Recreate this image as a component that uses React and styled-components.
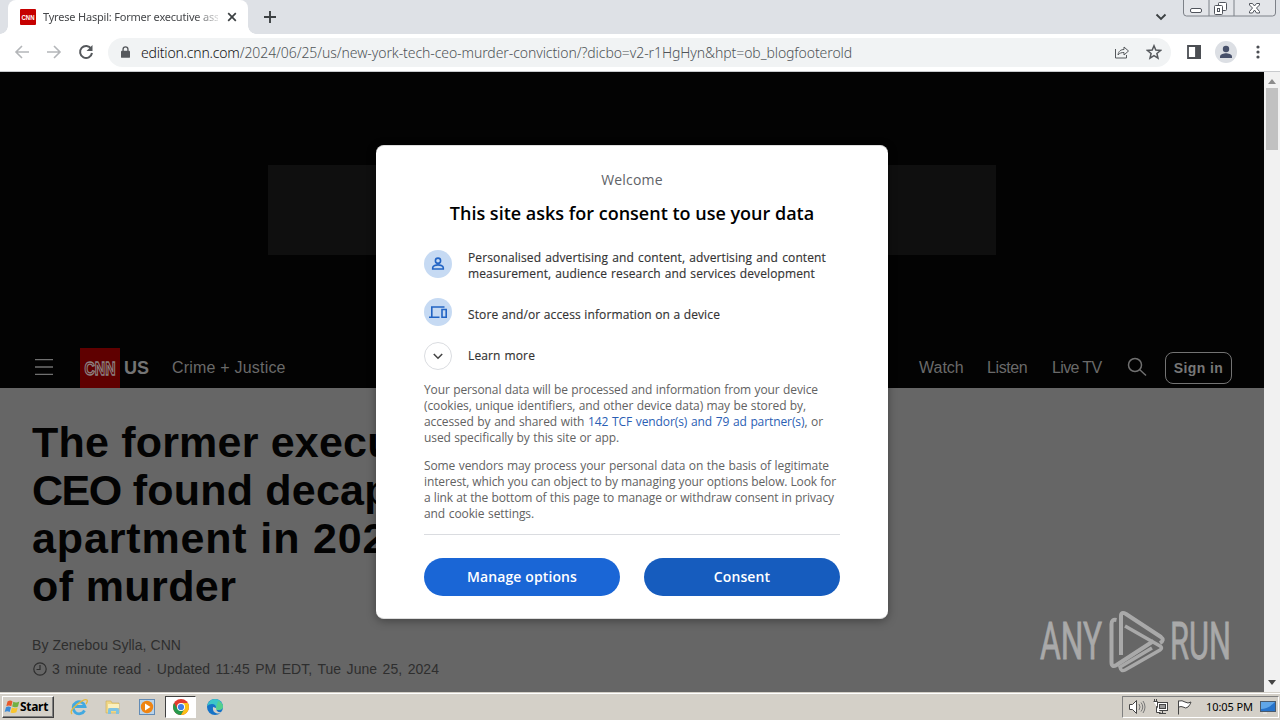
import React from 'react'
import styled, { createGlobalStyle, css } from 'styled-components'

const sans = '"Liberation Sans", Arial, sans-serif'
const open = '"Open Sans", "Noto Sans", sans-serif'
const ui = '"Noto Sans", "Open Sans", sans-serif'

const App = () => (
  <Desktop>
    <GlobalStyle />
    <TabStrip>
      <Tab>
        <Favicon viewBox="0 0 16 16">
          <rect width="16" height="16" rx="1" fill="#c60000" />
          <text x="1.5" y="11" textLength="13" lengthAdjust="spacingAndGlyphs">
            CNN
          </text>
        </Favicon>
        <TabTitle>Tyrese Haspil: Former executive assi</TabTitle>
        <TabClose viewBox="0 0 10 10">
          <path d="M1.2 1.2l7.6 7.6M8.8 1.2L1.2 8.8" />
        </TabClose>
      </Tab>
      <NewTab viewBox="0 0 14 14">
        <path d="M7 1v12M1 7h12" />
      </NewTab>
      <TabSearch viewBox="0 0 12 8">
        <path d="M1.5 1.5L6 6l4.5-4.5" />
      </TabSearch>
      <WindowButtons viewBox="0 0 94 17">
        <path
          d="M.5 0v13q0 3 3 3h86q3 0 3-3V0M26 0v16M51 0v16"
          fill="#e3e5e9"
          stroke="#7d8188"
        />
        <g fill="#fff" stroke="#50545c">
          <rect x="7.5" y="8.5" width="11" height="4" rx="1.5" />
          <rect x="35.5" y="2.5" width="8" height="8" rx="1" />
          <rect x="31.5" y="5.5" width="8" height="9" rx="1" />
          <rect x="34.5" y="8.5" width="2" height="3" />
          <path d="M66.5 3.500h3l2 2.500 2-2.500h3v1.500l-3 3 3 3.500v1.500h-3l-2-3-2 3h-3v-1.500l3-3.500-3-3z" />
        </g>
      </WindowButtons>
    </TabStrip>

    <Toolbar>
      <ToolIcon viewBox="0 0 16 16" $tone="#b4b6b9" $left={14}>
        <path d="M15 8H2M8 2L2 8l6 6" />
      </ToolIcon>
      <ToolIcon viewBox="0 0 16 16" $tone="#b4b6b9" $left={16}>
        <path d="M1 8h13M8 2l6 6-6 6" />
      </ToolIcon>
      <ToolIcon viewBox="0 0 16 16" $tone="#55585c" $left={16} $heavy>
        <path d="M13.2 4.800A6 6 0 1 0 14 9" />
        <path d="M14.5 1v6H8.500z" fill="#55585c" stroke="none" />
      </ToolIcon>
      <AddressBar>
        <Lock viewBox="0 0 10 13">
          <rect y="5" width="10" height="8" rx="1" fill="#55585c" />
          <path d="M2.3 5.500V3.500a2.700 2.700 0 0 1 5.400 0v2" />
        </Lock>
        <Url>
          <b>edition.cnn.com</b>
          /2024/06/25/us/new-york-tech-ceo-murder-conviction/?dicbo=v2-r1HgHyn&amp;hpt=ob_blogfooterold
        </Url>
        <BarIcon viewBox="0 0 16 16">
          <path d="M1.5 5v9h11v-3M4 11c.5-4 3-5.500 6-5.500V3l4.500 4L10 11V8.500C7.500 8.500 5.500 9 4 11z" />
        </BarIcon>
        <BarIcon viewBox="0 0 16 16" $heavy>
          <path d="M8 1.800l1.800 4.300 4.700.4-3.600 3 1.100 4.600L8 11.700l-4 2.400 1.100-4.600-3.600-3 4.700-.4z" />
        </BarIcon>
      </AddressBar>
      <SidePanel viewBox="0 0 14 14">
        <path d="M1 1h12v12H1z" />
        <path d="M9 1h4v12H9z" fill="#4b4e53" />
      </SidePanel>
      <Profile viewBox="0 0 22 22">
        <circle cx="11" cy="11" r="11" fill="#dcdfe4" />
        <circle cx="11" cy="8" r="3.2" />
        <path d="M5 17v-1.500c0-2.300 4-3.300 6-3.300s6 1 6 3.300V17z" />
      </Profile>
      <Kebab viewBox="0 0 4 14">
        <circle cx="2" cy="2" r="1.6" />
        <circle cx="2" cy="7" r="1.6" />
        <circle cx="2" cy="12" r="1.6" />
      </Kebab>
    </Toolbar>

    <Viewport>
      <Page>
        <AdArea>
          <AdSlot />
        </AdArea>
        <NavBar>
          <Menu viewBox="0 0 18 16">
            <path d="M0 .7h18M0 8h18M0 15.300h18" />
          </Menu>
          <Logo viewBox="0 0 40 40">
            <rect width="40" height="40" fill="#5f0000" />
            <text x="4.5" y="26.5" textLength="31" lengthAdjust="spacingAndGlyphs">
              CNN
            </text>
          </Logo>
          <Edition>US</Edition>
          <Section>Crime + Justice</Section>
          <NavLink $w={44}>Watch</NavLink>
          <NavLink $w={41} $track={-0.4}>
            Listen
          </NavLink>
          <NavLink $w={50} $track={-0.65}>
            Live TV
          </NavLink>
          <Search viewBox="0 0 20 20">
            <circle cx="8" cy="8" r="6.5" />
            <path d="M12.8 12.800L19 18.500" />
          </Search>
          <SignIn>Sign in</SignIn>
        </NavBar>
        <Article>
          <Headline>
            <HeadLine $track={0.2}>The former executive</HeadLine>
            <HeadLine $track={0.2}>
              <Tight>CEO</Tight> found decapitated
            </HeadLine>
            <HeadLine $track={0.85}>apartment in 2020</HeadLine>
            <HeadLine $track={0.4}>of murder</HeadLine>
          </Headline>
          <Meta $w={149}>By Zenebou Sylla, CNN</Meta>
          <MetaRow>
            <Clock viewBox="0 0 14 14">
              <circle cx="7" cy="7" r="6.2" />
              <path d="M7 3v4.500H3.500" />
            </Clock>
            <Meta $w={387}>
              3 minute read · Updated 11:45 PM EDT, Tue June 25, 2024
            </Meta>
          </MetaRow>
        </Article>

        <Dialog>
          <Welcome>Welcome</Welcome>
          <Title>This site asks for consent to use your data</Title>
          <Purpose $gap={16} $top>
            <Badge viewBox="0 0 28 28">
              <circle cx="14" cy="14" r="14" fill="#c6daf3" stroke="none" />
              <circle cx="14" cy="10.7" r="2.6" />
              <path d="M8.7 19v-1.200c0-2 3.500-2.900 5.300-2.900s5.300.9 5.300 2.900V19z" />
            </Badge>
            <PurposeText>
              <Line $w={358}>Personalised advertising and content, advertising and content</Line>
              <Line $w={347}>measurement, audience research and services development</Line>
            </PurposeText>
          </Purpose>
          <Purpose $gap={16}>
            <Badge viewBox="0 0 28 28">
              <circle cx="14" cy="14" r="14" fill="#c6daf3" stroke="none" />
              <path d="M20.5 9H7.800v9.500M5 19.200h10.500" />
              <path d="M18 11.500h4.200v7.700H18z" />
            </Badge>
            <PurposeText $drop={5}>
              <Line $w={252}>Store and/or access information on a device</Line>
            </PurposeText>
          </Purpose>
          <Purpose $gap={12}>
            <Badge viewBox="0 0 28 28">
              <circle cx="14" cy="14" r="13.5" fill="#fff" stroke="#dadce0" strokeWidth="1" />
              <path d="M9.8 12l4.200 4.200 4.200-4.200" stroke="#444" />
            </Badge>
            <PurposeText>
              <Line $w={67}>Learn more</Line>
            </PurposeText>
          </Purpose>
          <Legal>
            <Line $w={394}>Your personal data will be processed and information from your device</Line>
            <Line $w={382}>(cookies, unique identifiers, and other device data) may be stored by,</Line>
            <Line $w={399}>
              accessed by and shared with <a>142 TCF vendor(s) and 79 ad partner(s)</a>, or
            </Line>
            <Line $w={195}>used specifically by this site or app.</Line>
          </Legal>
          <Legal>
            <Line $w={405}>Some vendors may process your personal data on the basis of legitimate</Line>
            <Line $w={412}>interest, which you can object to by managing your options below. Look for</Line>
            <Line $w={410}>a link at the bottom of this page to manage or withdraw consent in privacy</Line>
            <Line $w={110}>and cookie settings.</Line>
          </Legal>
          <Actions>
            <Button $bg="#1a66d6">Manage options</Button>
            <Button $bg="#165cbe">Consent</Button>
          </Actions>
        </Dialog>

        <Watermark viewBox="0 0 200 64">
          <text x="2" y="50" textLength="62" lengthAdjust="spacingAndGlyphs">
            ANY
          </text>
          <text x="132" y="50" textLength="61" lengthAdjust="spacingAndGlyphs">
            RUN
          </text>
          <g fill="none" stroke="#a9a9a9" strokeWidth="4">
            <path d="M78.5 11q-5-1-5 4v38q0 6 5 3l37-24" />
            <path d="M83 46V7q0-5 5-2l35 23q4 3-1 6" />
            <path d="M87 17l35 20q3 2 0 4L87 61q-4 2-5-3l32-19" strokeWidth="3.5" />
          </g>
        </Watermark>
      </Page>
      <Scrollbar>
        <Arrow viewBox="0 0 8 5">
          <path d="M0 5l4-5 4 5z" fill="#8b8b8b" />
        </Arrow>
        <Thumb />
        <Arrow viewBox="0 0 8 5" $bottom>
          <path d="M0 0h8L4 5z" fill="#444" />
        </Arrow>
      </Scrollbar>
    </Viewport>

    <Taskbar>
      <StartButton>
        <StartLogo viewBox="0 0 16 16">
          <path d="M3.5 2.500q3-2 5 0L7.300 7.200q-2.500-1.500-5 0z" fill="#e8592b" />
          <path d="M9.3 2.800q3 1.500 6-.3L14 7.400q-3 1.600-5.800.2z" fill="#72b043" />
          <path d="M2 8.200q2.500-1.500 5 0L5.700 13q-2.500-1.500-5 0z" fill="#3b8bd8" />
          <path d="M7.900 8.600q3 1.500 5.800-.2L12.400 13.300q-3 1.500-5.800.1z" fill="#f9c52e" />
        </StartLogo>
        Start
      </StartButton>
      <Quick>
        <TaskIcon viewBox="0 0 18 18">
          <path d="M14.5 12.500A6 6 0 1 1 15 8.500H5" fill="none" stroke="#42a9e0" strokeWidth="2.8" />
          <path d="M2 16Q-1 13 7 6.500T17 2q1 1.500-1 4" fill="none" stroke="#e5b93c" strokeWidth="1.3" />
        </TaskIcon>
      </Quick>
      <Quick>
        <TaskIcon viewBox="0 0 18 18">
          <path d="M2 3h5l1 2h7v10H2z" fill="#f0d786" stroke="#c9ad58" strokeWidth=".6" />
          <path d="M4 6h11v4H4z" fill="#fbf0bd" />
          <path d="M4 16v-4q0-2 2-2h7q2 0 2 2v4h-3v-3H7v3z" fill="#7fc3e2" />
        </TaskIcon>
      </Quick>
      <Quick>
        <TaskIcon viewBox="0 0 18 18">
          <rect x="1.5" y="1.5" width="15" height="15" fill="#b9d3ea" stroke="#628bb5" />
          <circle cx="9" cy="9" r="6.2" fill="#ef8412" />
          <path d="M7 5.500l5.500 3.500L7 12.500z" fill="#fff" />
        </TaskIcon>
      </Quick>
      <Quick $active>
        <TaskIcon viewBox="0 0 18 18">
          <circle cx="9" cy="9" r="8" fill="#e33b2e" />
          <path d="M2.1 5A8 8 0 0 0 9 17l3.500-6L9 9l-3.500 2z" fill="#279a4d" />
          <path d="M9 17a8 8 0 0 0 6.900-12H9l3.500 6z" fill="#fbc116" />
          <circle cx="9" cy="9" r="4" fill="#fff" />
          <circle cx="9" cy="9" r="3.1" fill="#3f7ee8" />
        </TaskIcon>
      </Quick>
      <Quick>
        <TaskIcon viewBox="0 0 18 18">
          <circle cx="9" cy="9" r="8" fill="#1673c7" />
          <path d="M1.2 8Q3 1 9 1t8 7q0 4-5 4-3 0-2-2 0-4-4-4-3 0-4.800 2z" fill="#3cc6c8" />
          <path d="M12 3q5 2 5 5.500T12 12q-3 0-2-2z" fill="#55cf8d" />
          <path d="M7 9q-1 5 4 6.500 3 .5 5-1.500-6 1-6-4z" fill="#d4d0c8" />
        </TaskIcon>
      </Quick>
      <Tray>
        <TrayIcon viewBox="0 0 18 16">
          <path d="M1.5 5.500h3l4-4v13l-4-4h-3z" />
          <path d="M11 5q2 3 0 6M13 3.500q3.500 4.500 0 9M15 2q4 6 0 12" stroke="#777" fill="none" />
        </TrayIcon>
        <TrayIcon viewBox="0 0 18 16">
          <rect x="5.5" y="3.5" width="10" height="8" />
          <rect x="7.5" y="5.5" width="6" height="4" fill="#999" />
          <path d="M7 14.500h7M10.500 12v2" />
          <path d="M1.5 2.500h4v4l-1 1v6h4M2.500 0v3M4.500 0v3" />
        </TrayIcon>
        <TrayIcon viewBox="0 0 18 16">
          <path d="M2.5 15.500V1.500M3 2q3-1 6 1t6 0q-1 3-3 5-2 2-5 0-2-1-4 0" />
        </TrayIcon>
        <Time>10:05 PM</Time>
        <ShowDesktop viewBox="0 0 16 14">
          <rect x=".5" y="1.5" width="15" height="10" fill="#2773ca" stroke="#4a5a6c" />
          <path d="M1 9q7 0 14-7H1z" fill="#60a6e8" />
          <path d="M3 13h4" stroke="#eee" />
        </ShowDesktop>
      </Tray>
    </Taskbar>
  </Desktop>
)

export default App

const GlobalStyle = createGlobalStyle`
  * {
    box-sizing: border-box;
  }
  body {
    margin: 0;
    overflow: hidden;
  }
  svg {
    display: block;
    flex-shrink: 0;
  }
`
const Desktop = styled.div`
  display: flex;
  flex-direction: column;
  width: 1280px;
  height: 720px;
  overflow: hidden;
  background: #fff;
`

/* browser chrome */
const TabStrip = styled.div`
  display: flex;
  height: 34px;
  padding-left: 8px;
  background: #dee1e6;
`
const Tab = styled.div`
  position: relative;
  display: flex;
  align-items: center;
  width: 240px;
  padding: 0 11px 0 12px;
  border-radius: 8px 8px 0 0;
  background: #fff;
  &:before,
  &:after {
    content: '';
    position: absolute;
    bottom: 0;
    left: -8px;
    width: 8px;
    height: 8px;
    background: radial-gradient(circle at 0 0, transparent 7.5px, #fff 8px);
  }
  &:after {
    left: auto;
    right: -8px;
    background: radial-gradient(circle at 100% 0, transparent 7.5px, #fff 8px);
  }
`
const Favicon = styled.svg`
  width: 16px;
  height: 16px;
  text {
    font: bold 7px ${sans};
    fill: #fff;
  }
`
const TabTitle = styled.div`
  width: 175px;
  margin: 0 9px 0 7px;
  overflow: hidden;
  font: 11px/18px ${ui};
  letter-spacing: -0.2px;
  white-space: nowrap;
  color: #45474a;
  mask-image: linear-gradient(90deg, #000 152px, transparent 180px);
`
const TabClose = styled.svg`
  width: 10px;
  height: 10px;
  stroke: #3c4043;
  stroke-width: 1.7;
`
const NewTab = styled.svg`
  width: 14px;
  height: 14px;
  margin: 10px 0 0 15px;
  stroke: #3c4043;
  stroke-width: 1.9;
`
const TabSearch = styled.svg`
  width: 12px;
  height: 8px;
  margin: 13px 16px 0 auto;
  fill: none;
  stroke: #3c4043;
  stroke-width: 1.9;
`
const WindowButtons = styled.svg`
  width: 94px;
  height: 17px;
  margin-right: 3px;
`
const Toolbar = styled.div`
  display: flex;
  align-items: center;
  height: 38px;
  padding-bottom: 1px;
  border-bottom: 1px solid #c8cacd;
  background: #fff;
`
const ToolIcon = styled.svg`
  width: 16px;
  height: 16px;
  margin-left: ${({ $left }) => $left}px;
  fill: none;
  stroke: ${({ $tone }) => $tone};
  stroke-width: ${({ $heavy }) => ($heavy ? 2 : 1.6)};
`
const AddressBar = styled.div`
  display: flex;
  align-items: center;
  width: 1063px;
  height: 29px;
  margin-left: 14px;
  padding: 0 9px 0 13px;
  border-radius: 15px;
  background: #f1f3f4;
`
const Lock = styled.svg`
  width: 9px;
  height: 12px;
  path {
    fill: none;
    stroke: #55585c;
    stroke-width: 1.5;
  }
`
const Url = styled.div`
  flex: 1;
  margin-left: 11px;
  padding-top: 1px;
  font: 300 14px/20px ${ui};
  letter-spacing: -0.085px;
  white-space: nowrap;
  color: #4f5357;
  b {
    font-weight: 300;
    letter-spacing: -0.2px;
    color: #111;
  }
`
const BarIcon = styled.svg`
  width: 16px;
  height: 16px;
  margin-left: 16px;
  fill: none;
  stroke: #55585c;
  stroke-width: ${({ $heavy }) => ($heavy ? 1.5 : 1)};
`
const SidePanel = styled.svg`
  width: 14px;
  height: 14px;
  margin-left: 16px;
  fill: none;
  stroke: #4b4e53;
  stroke-width: 1.8;
`
const Profile = styled.svg`
  width: 22px;
  height: 22px;
  margin-left: 14px;
  fill: #47506a;
`
const Kebab = styled.svg`
  width: 4px;
  height: 14px;
  margin-left: 19px;
  fill: #4b4e53;
`

/* page */
const Viewport = styled.div`
  display: flex;
  height: 620px;
`
const Page = styled.div`
  position: relative;
  width: 1264px;
  overflow: hidden;
  background: #666;
`
const AdArea = styled.div`
  height: 276px;
  padding: 93px 268px 0;
  background: #030303;
`
const AdSlot = styled.div`
  height: 90px;
  background: #0f0f0f;
`
const NavBar = styled.div`
  display: flex;
  align-items: center;
  height: 40px;
  padding: 0 32px 0 35px;
  background: #030303;
  font: 16px/20px ${sans};
  color: #6a6a6a;
`
const Menu = styled.svg`
  width: 18px;
  height: 16px;
  margin-bottom: 2px;
  stroke: #707070;
  stroke-width: 1.3;
`
const Logo = styled.svg`
  width: 40px;
  height: 40px;
  margin-left: 27px;
  text {
    font: bold 19px ${sans};
    fill: #5f0000;
    stroke: #8c8080;
    stroke-width: 1.3;
  }
`
const Edition = styled.div`
  width: 52px;
  padding-left: 4px;
  font-size: 18px;
  font-weight: bold;
  color: #747474;
`
const Section = styled.div`
  width: 114px;
  margin-right: auto;
  letter-spacing: 0.2px;
  white-space: nowrap;
`
const NavLink = styled.div`
  width: ${({ $w }) => $w}px;
  margin-right: 24px;
  letter-spacing: ${({ $track }) => $track || 0}px;
  white-space: nowrap;
`
const Search = styled.svg`
  width: 20px;
  height: 20px;
  margin: 0 18px 2px 1px;
  fill: none;
  stroke: #707070;
  stroke-width: 1.5;
`
const SignIn = styled.div`
  width: 67px;
  height: 32px;
  border: 1px solid #737373;
  border-radius: 8px;
  font-size: 14px;
  font-weight: bold;
  line-height: 30px;
  letter-spacing: 0.4px;
  text-align: center;
  color: #777;
`
const Article = styled.div`
  padding: 30px 0 0 32px;
`
const Headline = styled.h1`
  margin: 0 0 23px;
  font: bold 43px/48px ${sans};
  color: #030303;
`
const HeadLine = styled.div`
  letter-spacing: ${({ $track }) => $track}px;
`
const Tight = styled.span`
  letter-spacing: -1.5px;
`
const Meta = styled.div`
  width: ${({ $w }) => $w}px;
  font: 14px/24px ${sans};
  letter-spacing: 0.05px;
  text-align-last: justify;
  white-space: nowrap;
  color: #2e2e2e;
`
const MetaRow = styled.div`
  display: flex;
  align-items: center;
`
const Clock = styled.svg`
  width: 14px;
  height: 14px;
  margin: 0 5px 0 1px;
  fill: none;
  stroke: #2e2e2e;
  stroke-width: 1.2;
`

/* consent dialog */
const Dialog = styled.div`
  position: absolute;
  top: 73px;
  left: 376px;
  display: flex;
  flex-direction: column;
  width: 512px;
  height: 474px;
  padding: 24px 48px 0;
  border: 1px solid #ddd;
  border-width: 1px 0 1px 0;
  border-radius: 8px;
  background: #fff;
  box-shadow: 0 2px 10px rgba(0, 0, 0, 0.35);
  font-family: ${open};
`
const Welcome = styled.div`
  font-size: 14px;
  line-height: 20px;
  letter-spacing: 0.2px;
  text-align: center;
  color: #5f6368;
`
const Title = styled.div`
  margin: 11px 0 25px;
  font-size: 18px;
  font-weight: 600;
  line-height: 24px;
  letter-spacing: 0;
  text-align: center;
  white-space: nowrap;
  color: #000;
`
const Purpose = styled.div`
  display: flex;
  align-items: ${({ $top }) => ($top ? 'flex-start' : 'center')};
  margin-bottom: ${({ $gap }) => $gap}px;
`
const Badge = styled.svg`
  width: 28px;
  height: 28px;
  margin-right: 16px;
  fill: none;
  stroke: #2264c4;
  stroke-width: 1.6;
`
const PurposeText = styled.div`
  padding-top: ${({ $drop }) => $drop || 0}px;
  font-size: 12px;
  font-weight: 500;
  letter-spacing: 0.12px;
  color: #333;
  -webkit-text-stroke: 0.15px #333;
`
const Line = styled.div`
  width: ${({ $w }) => $w}px;
  height: 16px;
  line-height: 16px;
  text-align-last: justify;
  white-space: nowrap;
`
const Legal = styled.div`
  margin-bottom: 12px;
  font-size: 12px;
  letter-spacing: -0.1px;
  color: #626262;
  a {
    color: #2a5eb4;
  }
`
const Actions = styled.div`
  display: flex;
  gap: 24px;
  padding-top: 23px;
  border-top: 1px solid #dadce0;
`
const Button = styled.button`
  flex: 1;
  height: 38px;
  padding: 0;
  border: 0;
  border-radius: 19px;
  background: ${({ $bg }) => $bg};
  font: 600 14px/20px ${open};
  letter-spacing: 0.12px;
  color: #fff;
`
const Watermark = styled.svg`
  position: absolute;
  top: 537px;
  left: 1038px;
  width: 200px;
  height: 64px;
  text {
    font: 52px Roboto, ${sans};
    fill: #a9a9a9;
    stroke: #a9a9a9;
    stroke-width: 0.8;
  }
`
const Scrollbar = styled.div`
  display: flex;
  flex-direction: column;
  align-items: center;
  width: 16px;
  padding: 7px 0;
  background: #f1f1f1;
`
const Arrow = styled.svg`
  width: 8px;
  height: 5px;
  ${({ $bottom }) => $bottom && css`margin-top: auto;`};
`
const Thumb = styled.div`
  width: 12px;
  height: 62px;
  margin-top: 4px;
  background: #c1c1c1;
`

/* taskbar */
const Taskbar = styled.div`
  display: flex;
  align-items: center;
  height: 28px;
  padding: 1px 1px 0 2px;
  border-top: 1px solid #d4d0c8;
  background: #d4d0c8;
  box-shadow: inset 0 1px #fff;
`
const StartButton = styled.div`
  display: flex;
  align-items: center;
  width: 52px;
  height: 22px;
  margin-right: 9px;
  padding-left: 1px;
  border: 1px solid;
  border-color: #fff #404040 #404040 #fff;
  box-shadow: inset -1px -1px #808080;
  font: bold 12px/18px ${ui};
  letter-spacing: -0.3px;
  color: #000;
`
const StartLogo = styled.svg`
  width: 16px;
  height: 16px;
`
const TaskIcon = styled.svg`
  width: 18px;
  height: 18px;
`
const Quick = styled.div`
  display: flex;
  align-items: center;
  justify-content: center;
  width: 31px;
  height: 22px;
  margin-right: 3px;
  border: 1px solid transparent;
  ${({ $active }) =>
    $active &&
    css`
      border-color: #404040 #fff #fff #404040;
      background: #fff;
    `};
`
const Tray = styled.div`
  display: flex;
  align-items: center;
  width: 157px;
  height: 22px;
  margin-left: auto;
  padding-left: 5px;
  border: 1px solid;
  border-color: #808080 #fff #fff #808080;
`
const TrayIcon = styled.svg`
  width: 18px;
  height: 16px;
  margin-right: 6px;
  fill: #fff;
  stroke: #444;
`
const Time = styled.div`
  width: 46px;
  margin: 0 8px 0 6px;
  font: 11px/16px ${ui};
  letter-spacing: -0.1px;
  white-space: nowrap;
  color: #000;
`
const ShowDesktop = styled.svg`
  width: 16px;
  height: 14px;
`
